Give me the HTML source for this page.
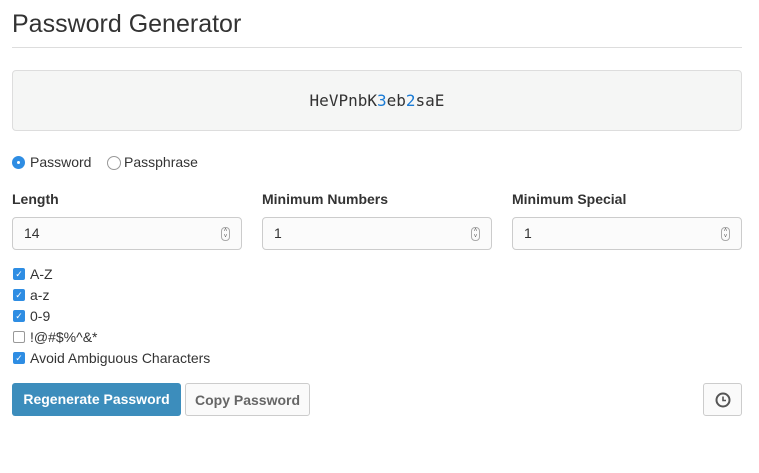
<!DOCTYPE html>
<html><head><style>
body{margin:0;background:#fff;font-family:"Liberation Sans",sans-serif;color:#333;width:759px;height:473px;overflow:hidden;position:relative}
.a{position:absolute}
h1{position:absolute;left:12px;top:10px;margin:0;font-size:25px;font-weight:normal;color:#333}
.hr{left:12px;top:47px;width:730px;height:1px;background:#ddd}
.pw{left:12px;top:70px;width:728px;height:59px;border:1px solid #ddd;border-radius:4px;background:#f5f6f5;text-align:center;line-height:60px;font-family:"DejaVu Sans Mono",monospace;font-size:16px;color:#333}
.pw b{font-weight:normal;color:#1a7bd5}
.lbl{font-size:14px;font-weight:bold;color:#333}
.inp{width:228px;height:31px;border:1px solid #ccc;border-radius:4px;background:#fbfbfb;font-size:14px;line-height:31px;box-sizing:content-box}
.inp span{margin-left:11px}
.sp{position:absolute;right:11px;top:9px;width:7px;height:12px;border:1px solid #aaa;border-radius:4px;font-size:6px;line-height:6px;text-align:center;color:#555}
.cb{left:13px;width:12px;height:12px;border-radius:2px;background:#2e8de3;color:#fff;font-size:9px;line-height:12px;text-align:center}
.cbt{left:30px;font-size:14px}
.btn{top:383px;height:33px;border-radius:3px;font-size:14px;font-weight:bold;line-height:33px;text-align:center;box-sizing:border-box}
</style></head><body>
<h1>Password Generator</h1>
<div class="a hr"></div>
<div class="a pw">HeVPnbK<b>3</b>eb<b>2</b>saE</div>
<div class="a" style="left:12px;top:156px;width:13px;height:13px;border-radius:50%;background:#2e8de3"><div style="position:absolute;left:5px;top:5px;width:3px;height:3px;border-radius:50%;background:#fff"></div></div>
<div class="a" style="left:30px;top:154px;font-size:14px">Password</div>
<div class="a" style="left:107px;top:156px;width:12px;height:12px;border-radius:50%;border:1px solid #999"></div>
<div class="a" style="left:124px;top:154px;font-size:14px">Passphrase</div>
<div class="a lbl" style="left:12px;top:191px">Length</div>
<div class="a lbl" style="left:262px;top:191px">Minimum Numbers</div>
<div class="a lbl" style="left:512px;top:191px">Minimum Special</div>
<div class="a inp" style="left:12px;top:217px"><span>14</span><div class="sp">˄<br>˅</div></div>
<div class="a inp" style="left:262px;top:217px"><span>1</span><div class="sp">˄<br>˅</div></div>
<div class="a inp" style="left:512px;top:217px"><span>1</span><div class="sp">˄<br>˅</div></div>
<div class="a cb" style="top:268px">✓</div><div class="a cbt" style="top:266px">A-Z</div>
<div class="a cb" style="top:289px">✓</div><div class="a cbt" style="top:287px">a-z</div>
<div class="a cb" style="top:310px">✓</div><div class="a cbt" style="top:308px">0-9</div>
<div class="a cb" style="top:331px;background:#fff;border:1px solid #999;width:10px;height:10px"></div><div class="a cbt" style="top:329px">!@#$%^&amp;*</div>
<div class="a cb" style="top:352px">✓</div><div class="a cbt" style="top:350px">Avoid Ambiguous Characters</div>
<div class="a btn" style="left:12px;width:169px;background:#3c8dbc;color:#fff">Regenerate Password</div>
<div class="a btn" style="left:185px;width:125px;border:1px solid #ccc;background:#fafafa;color:#666">Copy Password</div>
<div class="a btn" style="left:703px;width:39px;border:1px solid #ccc;background:#fafafa">
<svg width="16" height="16" viewBox="0 0 16 16" style="margin-top:8px"><circle cx="8" cy="8" r="6.5" fill="none" stroke="#555" stroke-width="2"/><path d="M8 4.5V8.5H11" fill="none" stroke="#555" stroke-width="1.6"/></svg></div>
</body></html>
